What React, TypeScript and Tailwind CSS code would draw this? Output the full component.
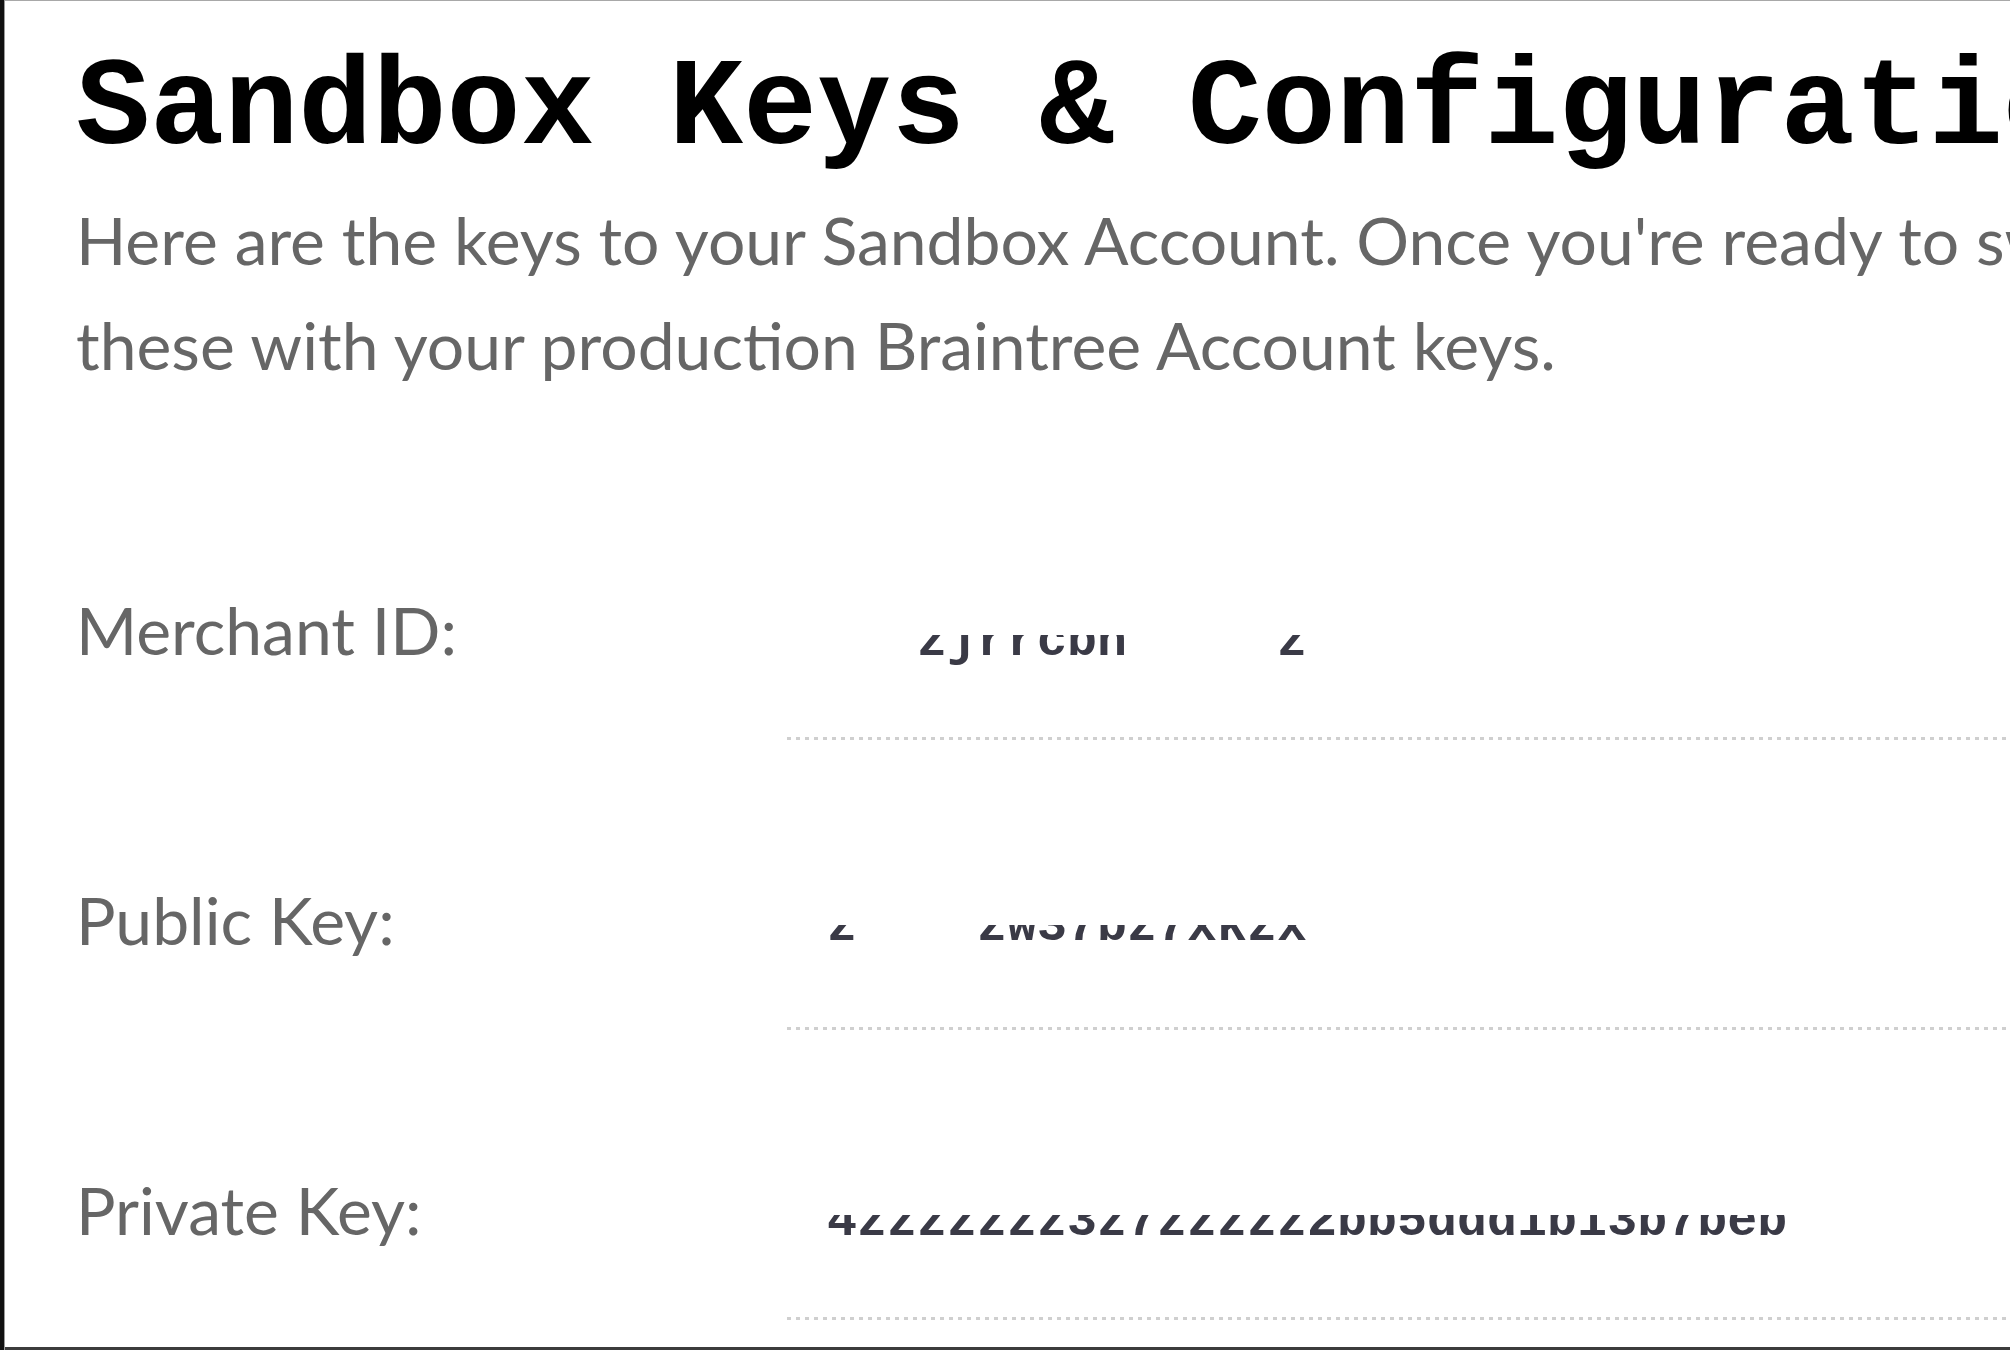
import React from 'react';

type KeyRow = {
  label: string;
  // value split in chunks, hidden chunks were blanked out in the screenshot
  chunks: { text: string; hidden?: boolean }[];
  clip: number;
};

const rows: KeyRow[] = [
  {
    label: 'Merchant ID:',
    chunks: [
      { text: 'k8d', hidden: true },
      { text: 'zjrrcbn' },
      { text: 'xhk4d', hidden: true },
      { text: 'z' },
    ],
    clip: 20,
  },
  {
    label: 'Public Key:',
    chunks: [
      { text: 'z' },
      { text: 'khq7', hidden: true },
      { text: 'zw37bz7xkzx' },
    ],
    clip: 15,
  },
  {
    label: 'Private Key:',
    chunks: [{ text: '4zzzzzzz3z7zzzzz2bb5ddd1b13b7beb' }],
    clip: 20,
  },
];

function DottedRule() {
  return (
    <div className="h-[3px] w-full bg-[repeating-linear-gradient(90deg,#cfcfcf_0px,#cfcfcf_4px,transparent_4px,transparent_9px)]" />
  );
}

function KeyValue({ row }: { row: KeyRow }) {
  return (
    <div className="flex h-[290px]">
      <div
        className="w-[711px] shrink-0 pt-[147px] text-[66px] leading-[66px] text-[#666]"
        style={{ fontFamily: 'Lato, "Open Sans", sans-serif' }}
      >
        {row.label}
      </div>
      <div className="flex flex-1 flex-col">
        <div className="flex-1 pl-[40px] pt-[185px]">
          <div className="h-[30px] overflow-hidden">
            <div
              className="whitespace-nowrap text-[50px] font-bold leading-[50px] text-[#3a3a46]"
              style={{
                fontFamily: '"Liberation Mono", "Courier New", monospace',
                marginTop: `${row.clip - 38}px`,
              }}
            >
              {row.chunks.map((c, i) => (
                <span key={i} className={c.hidden ? 'text-transparent' : ''}>
                  {c.text}
                </span>
              ))}
            </div>
          </div>
        </div>
        <DottedRule />
      </div>
    </div>
  );
}

export default function App() {
  return (
    <div className="flex h-[1350px] w-[2010px] overflow-hidden bg-white">
      <div className="w-[4px] shrink-0 bg-[#111]" />
      <div className="w-px shrink-0 bg-[#9a9a9a]" />
      <div className="flex min-w-0 flex-1 flex-col border-t border-b-[3px] border-t-[#a8a8a8] border-b-[#3c3c3c]">
        <div className="flex-1 overflow-hidden pl-[71px]">
          <h1
            className="mt-[47px] whitespace-nowrap text-[123.5px] font-bold leading-[124px] text-black"
            style={{ fontFamily: '"Liberation Mono", "Courier New", monospace' }}
          >
            Sandbox Keys &amp; Configuration
          </h1>
          <p
            className="mt-[15px] whitespace-nowrap text-[66px] leading-[105px] text-[#666]"
            style={{ fontFamily: 'Lato, "Open Sans", sans-serif' }}
          >
            Here are the keys to your Sandbox Account. Once you're ready to switch to production, replace
            <br />
            these with your production Braintree Account keys.
          </p>
          <div className="mt-[53px]">
            {rows.map((row) => (
              <KeyValue key={row.label} row={row} />
            ))}
          </div>
        </div>
      </div>
    </div>
  );
}
